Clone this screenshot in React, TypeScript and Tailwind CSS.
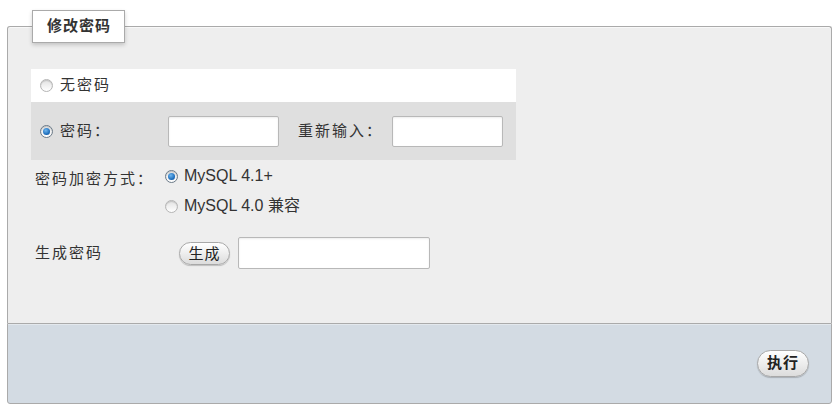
import React from "react";

const font = "font-['Liberation_Sans','Noto_Sans_CJK_SC',sans-serif]";

function Radio({ checked }: { checked?: boolean }) {
  return (
    <span
      className={`inline-flex h-[13px] w-[13px] shrink-0 items-center justify-center rounded-full border ${
        checked ? "border-[#6b7a88]" : "border-[#b5b5b5]"
      } bg-[linear-gradient(#e2e2e2,#ffffff)] shadow-[inset_0_1px_1px_rgba(0,0,0,0.15)]`}
    >
      {checked && (
        <span className="h-[7px] w-[7px] rounded-full bg-[radial-gradient(circle_at_40%_35%,#6fb7f0,#1565b5_70%,#0b3f7a)]" />
      )}
    </span>
  );
}

function TextBox({ w, h }: { w: string; h: string }) {
  return (
    <input
      type="text"
      className={`${w} ${h} rounded-[2px] border border-[#b8b8b8] bg-white shadow-[inset_0_1px_2px_rgba(0,0,0,0.08)] outline-none`}
    />
  );
}

function PillButton({ label, bold }: { label: string; bold?: boolean }) {
  return (
    <button
      className={`rounded-full border border-[#a8a8a8] bg-[linear-gradient(#ffffff,#dcdcdc)] tracking-[1px] text-[#222] shadow-[0_1px_1px_rgba(0,0,0,0.2)] ${
        bold ? "h-[27px] w-[52px] text-[15px] font-bold" : "h-[23px] w-[51px] text-[15px]"
      }`}
    >
      {label}
    </button>
  );
}

export default function App() {
  return (
    <div className={`h-[407px] w-[835px] bg-white pt-[10px] pl-[7px] pr-[3px] text-[15px] tracking-[2px] text-[#333] ${font}`}>
      {/* 表单主体 */}
      <fieldset className="h-[313px] rounded-t-[3px] border border-b-0 border-[#aaaaaa] bg-[#eeeeee] shadow-[inset_0_1px_0_#f8f8f8]">
        <legend className="ml-[24px] flex h-[33px] w-[93px] items-center justify-center border border-[#aaaaaa] bg-white pl-[1px] text-[15px] font-bold tracking-[1px] text-[#333] shadow-[0_2px_4px_rgba(0,0,0,0.18)]">
          修改密码
        </legend>

        <div className="ml-[23px] mt-[26px] w-[485px]">
          <div className="flex h-[33px] items-center gap-[7px] bg-white pl-[9px]">
            <Radio />
            <span>无密码</span>
          </div>
          <div className="flex h-[58px] items-center bg-[#dfdfdf] pl-[9px]">
            <div className="flex w-[128px] items-center gap-[7px]">
              <Radio checked />
              <span>密码：</span>
            </div>
            <TextBox w="w-[111px]" h="h-[31px]" />
            <span className="ml-[19px] w-[94px]">重新输入：</span>
            <TextBox w="w-[111px]" h="h-[31px]" />
          </div>
        </div>

        <div className="ml-[27px] mt-[6px] flex">
          <span className="w-[130px] pt-[2px]">密码加密方式：</span>
          <div className="flex flex-col gap-[10px] text-[16px] tracking-normal">
            <div className="flex h-[20px] items-center gap-[6px]">
              <Radio checked />
              <span>MySQL 4.1+</span>
            </div>
            <div className="flex h-[20px] items-center gap-[6px]">
              <Radio />
              <span>MySQL 4.0 兼容</span>
            </div>
          </div>
        </div>

        <div className="ml-[27px] mt-[21px] flex items-center">
          <span className="w-[144px]">生成密码</span>
          <PillButton label="生成" />
          <div className="ml-[8px]">
            <TextBox w="w-[192px]" h="h-[32px]" />
          </div>
        </div>
      </fieldset>

      {/* 底部操作栏 */}
      <div className="flex h-[81px] items-center justify-end rounded-b-[3px] border border-[#aaaaaa] bg-[#d3dbe3] pr-[22px] shadow-[inset_0_1px_0_#e3e8ed]">
        <PillButton label="执行" bold />
      </div>
    </div>
  );
}
